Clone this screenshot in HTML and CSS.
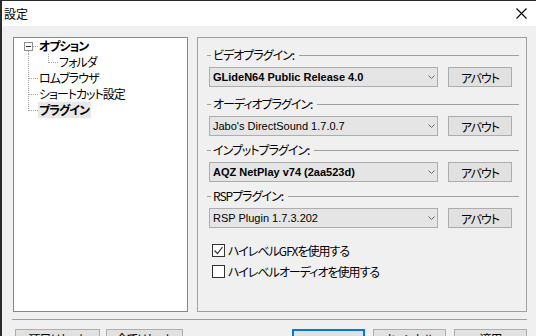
FILE: index.html
```
<!DOCTYPE html>
<html lang="ja">
<head>
    <meta charset="UTF-8">
    <title>設定</title>
    <link rel="stylesheet" href="styles.css">
</head>
<body>
    <div class="window">
        <div class="titlebar">
            <span class="title">設定</span>
            <svg class="close" width="11" height="11" viewBox="0 0 11 11"><path d="M0.5 0.5L10.5 10.5M10.5 0.5L0.5 10.5" stroke="#000" stroke-width="1.1" fill="none"/></svg>
        </div>
        <div class="content">
            <div class="panes">
                <div class="tree">
                    <div class="node">
                        <svg class="gutter" width="24" height="16"><rect x="10.5" y="4.5" width="8" height="8" fill="#fff" stroke="#919191"/><path d="M12 8.5H17" stroke="#333"/><path d="M19 8.5H24M14.5 13V16" stroke="#a0a0a0" stroke-dasharray="1 1"/></svg>
                        <span class="label bold">オプション</span>
                    </div>
                    <div class="node">
                        <svg class="gutter wide" width="44" height="16"><path d="M14.5 0V16M34.5 0V9M35 8.5H44" stroke="#a0a0a0" stroke-dasharray="1 1"/></svg>
                        <span class="label">フォルダ</span>
                    </div>
                    <div class="node">
                        <svg class="gutter" width="24" height="16"><path d="M14.5 0V16M15 8.5H24" stroke="#a0a0a0" stroke-dasharray="1 1"/></svg>
                        <span class="label">ロムブラウザ</span>
                    </div>
                    <div class="node">
                        <svg class="gutter" width="24" height="16"><path d="M14.5 0V16M15 8.5H24" stroke="#a0a0a0" stroke-dasharray="1 1"/></svg>
                        <span class="label">ショートカット設定</span>
                    </div>
                    <div class="node">
                        <svg class="gutter" width="24" height="16"><path d="M14.5 0V9M15 8.5H24" stroke="#a0a0a0" stroke-dasharray="1 1"/></svg>
                        <span class="label bold selected">プラグイン</span>
                    </div>
                </div>

                <div class="page">
                    <div class="group first">
                        <div class="group-title"><span>ビデオプラグイン:</span></div>
                        <div class="plugin-row">
                            <div class="combo bold-text"><span>GLideN64 Public Release 4.0</span><svg class="arrow" width="7" height="4"><path d="M0.5 0.5L3.5 3.5L6.5 0.5" stroke="#6a6a6a" fill="none"/></svg></div>
                            <div class="btn about">アバウト</div>
                        </div>
                    </div>
                    <div class="group">
                        <div class="group-title"><span>オーディオプラグイン:</span></div>
                        <div class="plugin-row">
                            <div class="combo"><span>Jabo's DirectSound 1.7.0.7</span><svg class="arrow" width="7" height="4"><path d="M0.5 0.5L3.5 3.5L6.5 0.5" stroke="#6a6a6a" fill="none"/></svg></div>
                            <div class="btn about">アバウト</div>
                        </div>
                    </div>
                    <div class="group">
                        <div class="group-title"><span>インプットプラグイン:</span></div>
                        <div class="plugin-row">
                            <div class="combo bold-text"><span>AQZ NetPlay v74 (2aa523d)</span><svg class="arrow" width="7" height="4"><path d="M0.5 0.5L3.5 3.5L6.5 0.5" stroke="#6a6a6a" fill="none"/></svg></div>
                            <div class="btn about">アバウト</div>
                        </div>
                    </div>
                    <div class="group">
                        <div class="group-title"><span>RSPプラグイン:</span></div>
                        <div class="plugin-row">
                            <div class="combo"><span>RSP Plugin 1.7.3.202</span><svg class="arrow" width="7" height="4"><path d="M0.5 0.5L3.5 3.5L6.5 0.5" stroke="#6a6a6a" fill="none"/></svg></div>
                            <div class="btn about">アバウト</div>
                        </div>
                    </div>

                    <div class="checks">
                        <div class="check">
                            <span class="box"><svg width="11" height="11"><path d="M1.5 5.5L4.5 8.5L9.5 2" stroke="#333" stroke-width="1.2" fill="none"/></svg></span>
                            <span>ハイレベルGFXを使用する</span>
                        </div>
                        <div class="check">
                            <span class="box"></span>
                            <span>ハイレベルオーディオを使用する</span>
                        </div>
                    </div>
                </div>
            </div>

            <div class="separator"></div>

            <div class="footer">
                <div class="footer-left">
                    <div class="btn reset">項目リセット</div>
                    <div class="btn reset-all">全てリセット</div>
                </div>
                <div class="footer-right">
                    <div class="btn action default">OK</div>
                    <div class="btn action">キャンセル</div>
                    <div class="btn action">適用</div>
                </div>
            </div>
        </div>
    </div>
</body>
</html>
```

FILE: styles.css
```
html, body { margin: 0; padding: 0; }
body { width: 536px; height: 336px; overflow: hidden; background: #f0f0f0; font-family: "Noto Sans CJK JP", sans-serif; font-size: 12px; font-feature-settings: "palt"; letter-spacing: -1px; color: #000; }

.window { width: 536px; height: 336px; box-sizing: border-box; border-left: 2px solid #2b2b2b; border-top: 1px solid #2b2b2b; background: #f0f0f0; }
.titlebar { height: 25px; background: #fff; display: flex; align-items: center; justify-content: space-between; padding: 0 9px 0 2px; }
.title { font-size: 12px; line-height: 14px; letter-spacing: 0; }
.close { display: block; }

.content { padding: 11px 9px 0 11px; }
.panes { display: flex; gap: 9px; height: 275px; }

.tree { width: 175px; box-sizing: border-box; border: 1px solid #828790; background: #fff; }
.node { display: flex; align-items: center; height: 16px; }
.gutter { display: block; flex: none; }
.label { line-height: 16px; height: 16px; padding: 0 2px 0 1px; white-space: nowrap; }
.label.bold { font-weight: bold; }
.label.selected { background: #e8e8e8; }

.page { width: 330px; box-sizing: border-box; border: 1px solid #a0a0a0; padding: 10px 7px 0 9px; }
.group + .group { margin-top: 7px; }
.group.first { margin-bottom: 10px; }
.group-title { display: flex; align-items: center; height: 14px; line-height: 14px; }
.group-title::before { content: ""; width: 4px; height: 1px; background: #a0a0a0; margin-right: 2px; }
.group-title::after { content: ""; flex: 1; height: 1px; background: #a0a0a0; margin-left: 5px; }
.group-title span { white-space: nowrap; }

.plugin-row { display: flex; gap: 10px; margin: 5px 0 0 2px; }
.combo { width: 229px; height: 20px; box-sizing: border-box; border: 1px solid #adadad; background: #e5e5e5; display: flex; align-items: center; padding: 0 2px 0 3px; font-family: "Liberation Sans", Arial, sans-serif; font-size: 11px; letter-spacing: 0; }
.combo.bold-text span { font-weight: bold; }
.combo span { white-space: nowrap; }
.arrow { margin-left: auto; display: block; }

.btn { box-sizing: border-box; border: 1px solid #adadad; background: #e1e1e1; display: flex; align-items: center; justify-content: center; white-space: nowrap; }
.about { width: 64px; height: 20px; }

.checks { margin-top: 14px; margin-left: 5px; display: flex; flex-direction: column; gap: 5px; }
.check { display: flex; align-items: center; height: 16px; gap: 3px; }
.box { width: 13px; height: 13px; box-sizing: border-box; border: 1px solid #333; background: #fff; display: flex; align-items: center; justify-content: center; }
.box svg { display: block; }

.separator { height: 1px; background: #a0a0a0; margin: 7px 0 0 -1px; }

.footer { display: flex; justify-content: space-between; margin-top: 9px; }
.footer-left, .footer-right { display: flex; }
.footer-left { gap: 6px; margin-left: 2px; }
.footer-right { gap: 8px; }
.footer .btn { align-items: flex-start; padding-top: 0; line-height: 17px; }
.reset { width: 85px; height: 23px; }
.reset-all { width: 77px; height: 23px; }
.action { width: 73px; height: 23px; }
.action.default { border: 2px solid #0078d7; }
```
